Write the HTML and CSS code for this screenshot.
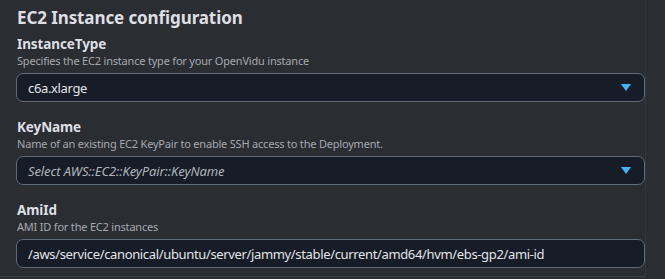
FILE: index.html
```html
<!DOCTYPE html>
<html lang="en">
<head>
  <meta charset="UTF-8">
  <title>EC2 Instance configuration</title>
  <link rel="stylesheet" href="styles.css">
</head>
<body>
  <div class="panel">
    <h2>EC2 Instance configuration</h2>
    <div class="field">
      <label>InstanceType</label>
      <div class="hint">Specifies the EC2 instance type for your OpenVidu instance</div>
      <div class="select">
        <span>c6a.xlarge</span>
        <svg width="10" height="7" viewBox="0 0 10 7"><path d="M0 0h10L5 7z" fill="#42b4ff"/></svg>
      </div>
    </div>
    <div class="field">
      <label>KeyName</label>
      <div class="hint">Name of an existing EC2 KeyPair to enable SSH access to the Deployment.</div>
      <div class="select">
        <span class="placeholder">Select AWS::EC2::KeyPair::KeyName</span>
        <svg width="10" height="7" viewBox="0 0 10 7"><path d="M0 0h10L5 7z" fill="#42b4ff"/></svg>
      </div>
    </div>
    <div class="field">
      <label>AmiId</label>
      <div class="hint">AMI ID for the EC2 instances</div>
      <div class="input">/aws/service/canonical/ubuntu/server/jammy/stable/current/amd64/hvm/ebs-gp2/ami-id</div>
    </div>
  </div>
</body>
</html>
```

FILE: styles.css
```css
html, body {
  margin: 0;
  padding: 0;
  background-color: #2a2d32;
  font-family: "Noto Sans", sans-serif;
  color: #dedfe3;
  overflow: hidden;
}
.panel {
  width: 646px;
  height: 277px;
  padding: 6px 0 0 16px;
  box-sizing: border-box;
  border-right: 1px solid #33373d;
  border-bottom: 1px solid #3a3e45;
}
h2 {
  margin: 0 0 5px 1px;
  font-size: 17px;
  line-height: 24px;
  font-weight: 700;
  letter-spacing: -0.1px;
}
.field {
  margin-bottom: 16px;
}
.field label {
  display: block;
  margin-left: 1px;
  font-size: 13.5px;
  line-height: 18px;
  font-weight: 700;
  letter-spacing: -0.1px;
}
.hint {
  margin-left: 1px;
  font-size: 11px;
  line-height: 15px;
  letter-spacing: -0.2px;
  color: #a5a9b0;
}
.select, .input {
  display: flex;
  align-items: center;
  justify-content: space-between;
  height: 29px;
  margin-top: 5px;
  padding: 0 13px 0 11px;
  box-sizing: border-box;
  background-color: #161d26;
  border: 1px solid #5f6b7a;
  border-radius: 7px;
  font-size: 13px;
  letter-spacing: -0.35px;
  color: #e2e4e8;
}
.placeholder {
  font-style: italic;
  letter-spacing: -0.1px;
  color: #b0b5bc;
}
```
